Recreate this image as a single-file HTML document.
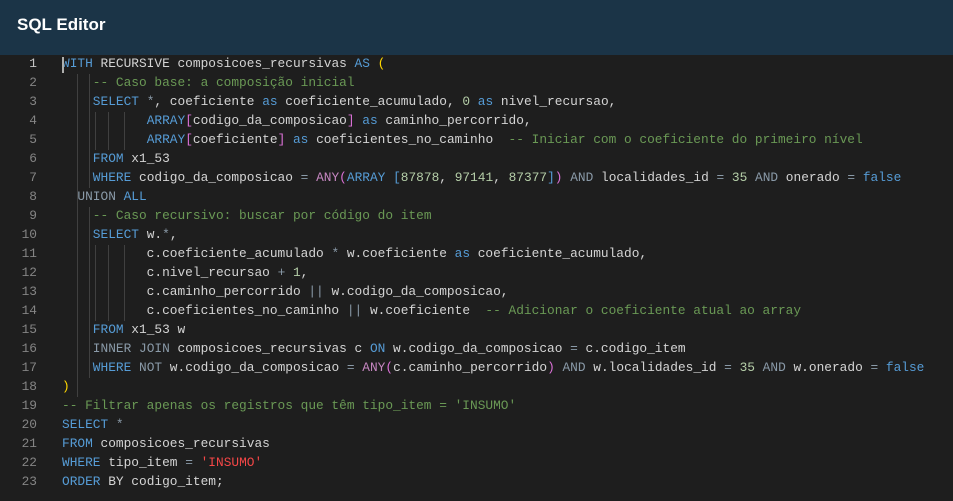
<!DOCTYPE html>
<html><head><meta charset="utf-8"><style>
html,body{margin:0;padding:0;width:953px;height:501px;overflow:hidden;background:#1e1e1e}
.hd{height:55px;background:#1b3447;color:#fff;font:bold 17px "Liberation Sans",sans-serif;line-height:50px;padding-left:17px;box-sizing:border-box}
.ed{position:relative;background:#1e1e1e;height:446px}
.ln{position:absolute;left:0;width:37px;text-align:right;color:#858585}
.l{position:absolute;left:0;height:19px;line-height:19px;font:12.83px "Liberation Mono",monospace;white-space:pre;width:953px}
.c{position:absolute;left:62px;color:#d4d4d4}
.k{color:#569cd6}.m{color:#6a9955}.n{color:#b5cea8}.s{color:#f44747}.p{color:#c586c0}.y{color:#ffd700}.b{color:#da70d6}.o{color:#8a9aa8}
.g{position:absolute;width:1px;background:#404040}
.cur{position:absolute;left:62px;top:2px;width:2px;height:16px;background:#aeafad}
</style></head><body>
<div class="hd">SQL Editor</div>
<div class="ed">
<div class="g" style="left:77px;top:19px;height:323px"></div>
<div class="g" style="left:89px;top:19px;height:114px"></div>
<div class="g" style="left:89px;top:152px;height:171px"></div>
<div class="g" style="left:95px;top:57px;height:38px"></div>
<div class="g" style="left:108px;top:57px;height:38px"></div>
<div class="g" style="left:124px;top:57px;height:38px"></div>
<div class="g" style="left:95px;top:190px;height:76px"></div>
<div class="g" style="left:108px;top:190px;height:76px"></div>
<div class="g" style="left:124px;top:190px;height:76px"></div>
<div class="l" style="top:1px;color:#c6c6c6"><span class="ln" style="color:#c6c6c6">1</span><span class="c"><span class="k">WITH</span> RECURSIVE composicoes_recursivas <span class="k">AS</span> <span class="y">(</span></span></div>
<div class="cur"></div>
<div class="l" style="top:20px"><span class="ln">2</span><span class="c">    <span class="m">-- Caso base: a composição inicial</span></span></div>
<div class="l" style="top:39px"><span class="ln">3</span><span class="c">    <span class="k">SELECT</span> <span class="o">*</span>, coeficiente <span class="k">as</span> coeficiente_acumulado, <span class="n">0</span> <span class="k">as</span> nivel_recursao,</span></div>
<div class="l" style="top:58px"><span class="ln">4</span><span class="c">           <span class="k">ARRAY</span><span class="b">[</span>codigo_da_composicao<span class="b">]</span> <span class="k">as</span> caminho_percorrido,</span></div>
<div class="l" style="top:77px"><span class="ln">5</span><span class="c">           <span class="k">ARRAY</span><span class="b">[</span>coeficiente<span class="b">]</span> <span class="k">as</span> coeficientes_no_caminho  <span class="m">-- Iniciar com o coeficiente do primeiro nível</span></span></div>
<div class="l" style="top:96px"><span class="ln">6</span><span class="c">    <span class="k">FROM</span> x1_53</span></div>
<div class="l" style="top:115px"><span class="ln">7</span><span class="c">    <span class="k">WHERE</span> codigo_da_composicao <span class="o">=</span> <span class="p">ANY</span><span class="b">(</span><span class="k">ARRAY</span> <span class="k">[</span><span class="n">87878</span>, <span class="n">97141</span>, <span class="n">87377</span><span class="k">]</span><span class="b">)</span> <span class="o">AND</span> localidades_id <span class="o">=</span> <span class="n">35</span> <span class="o">AND</span> onerado <span class="o">=</span> <span class="k">false</span></span></div>
<div class="l" style="top:134px"><span class="ln">8</span><span class="c">  <span class="o">UNION</span> <span class="k">ALL</span></span></div>
<div class="l" style="top:153px"><span class="ln">9</span><span class="c">    <span class="m">-- Caso recursivo: buscar por código do item</span></span></div>
<div class="l" style="top:172px"><span class="ln">10</span><span class="c">    <span class="k">SELECT</span> w.<span class="o">*</span>,</span></div>
<div class="l" style="top:191px"><span class="ln">11</span><span class="c">           c.coeficiente_acumulado <span class="o">*</span> w.coeficiente <span class="k">as</span> coeficiente_acumulado,</span></div>
<div class="l" style="top:210px"><span class="ln">12</span><span class="c">           c.nivel_recursao <span class="o">+</span> <span class="n">1</span>,</span></div>
<div class="l" style="top:229px"><span class="ln">13</span><span class="c">           c.caminho_percorrido <span class="o">||</span> w.codigo_da_composicao,</span></div>
<div class="l" style="top:248px"><span class="ln">14</span><span class="c">           c.coeficientes_no_caminho <span class="o">||</span> w.coeficiente  <span class="m">-- Adicionar o coeficiente atual ao array</span></span></div>
<div class="l" style="top:267px"><span class="ln">15</span><span class="c">    <span class="k">FROM</span> x1_53 w</span></div>
<div class="l" style="top:286px"><span class="ln">16</span><span class="c">    <span class="o">INNER</span> <span class="o">JOIN</span> composicoes_recursivas c <span class="k">ON</span> w.codigo_da_composicao <span class="o">=</span> c.codigo_item</span></div>
<div class="l" style="top:305px"><span class="ln">17</span><span class="c">    <span class="k">WHERE</span> <span class="o">NOT</span> w.codigo_da_composicao <span class="o">=</span> <span class="p">ANY</span><span class="b">(</span>c.caminho_percorrido<span class="b">)</span> <span class="o">AND</span> w.localidades_id <span class="o">=</span> <span class="n">35</span> <span class="o">AND</span> w.onerado <span class="o">=</span> <span class="k">false</span></span></div>
<div class="l" style="top:324px"><span class="ln">18</span><span class="c"><span class="y">)</span></span></div>
<div class="l" style="top:343px"><span class="ln">19</span><span class="c"><span class="m">-- Filtrar apenas os registros que têm tipo_item = 'INSUMO'</span></span></div>
<div class="l" style="top:362px"><span class="ln">20</span><span class="c"><span class="k">SELECT</span> <span class="o">*</span></span></div>
<div class="l" style="top:381px"><span class="ln">21</span><span class="c"><span class="k">FROM</span> composicoes_recursivas</span></div>
<div class="l" style="top:400px"><span class="ln">22</span><span class="c"><span class="k">WHERE</span> tipo_item <span class="o">=</span> <span class="s">'INSUMO'</span></span></div>
<div class="l" style="top:419px"><span class="ln">23</span><span class="c"><span class="k">ORDER</span> BY codigo_item;</span></div>
</div>
</body></html>
